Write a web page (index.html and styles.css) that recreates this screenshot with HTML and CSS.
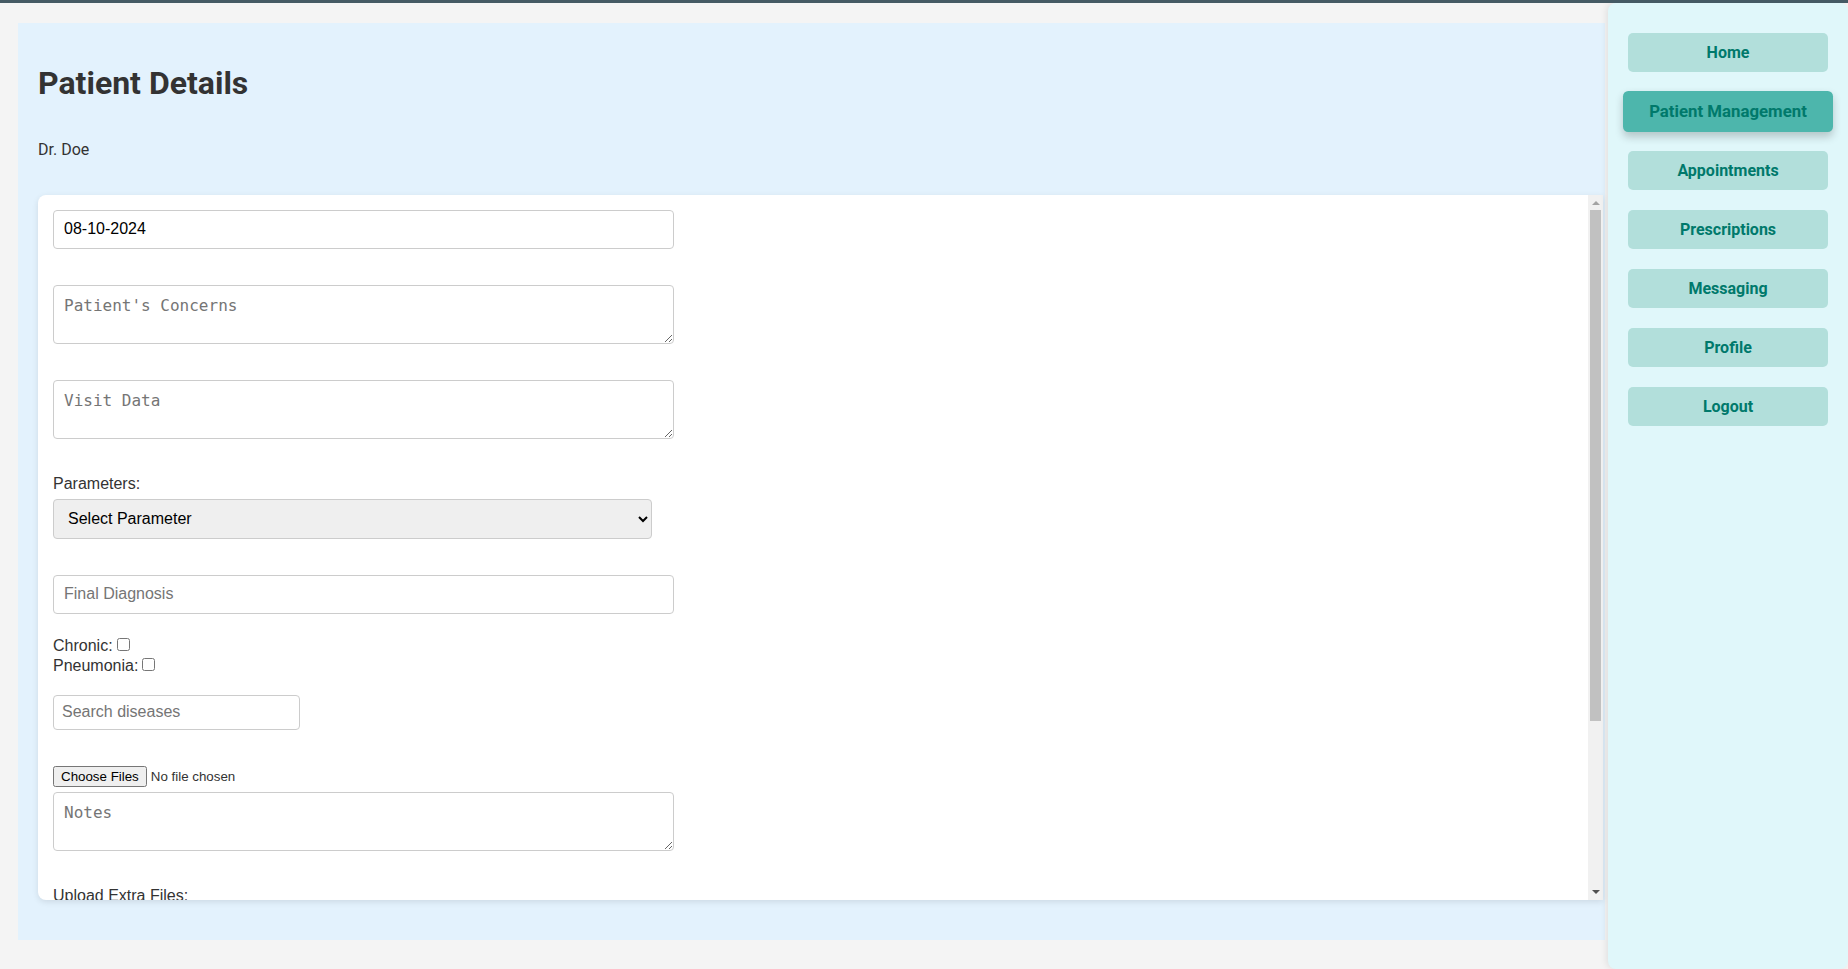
FILE: index.html
```html
<!DOCTYPE html>
<html lang="en">
<head>
    <meta charset="UTF-8">
    <meta name="viewport" content="width=device-width, initial-scale=1.0">
    <title>Patient Details</title>
    <link rel="stylesheet" href="styles.css">
</head>
<body>
    <div class="main">
        <div class="patient-panel">
            <h1>Patient Details</h1>
            <p class="doctor-name">Dr. Doe</p>

            <div class="visit-card">
                <div class="card-scroll">
                    <form class="visit-form">
                        <input type="text" class="field" value="08-10-2024">
                        <textarea class="field area" placeholder="Patient's Concerns"></textarea>
                        <textarea class="field area" placeholder="Visit Data"></textarea>

                        <label class="field-label" for="parameter">Parameters:</label>
                        <select id="parameter" class="param-select">
                            <option>Select Parameter</option>
                            <option>Blood Pressure</option>
                            <option>Heart Rate</option>
                            <option>Temperature</option>
                            <option>Oxygen Saturation</option>
                        </select>

                        <input type="text" class="field diagnosis" placeholder="Final Diagnosis">

                        <div class="checks">
                            <label>Chronic:<input type="checkbox"></label>
                            <label>Pneumonia:<input type="checkbox"></label>
                        </div>

                        <input type="text" class="search" placeholder="Search diseases">

                        <input type="file" class="file-input" multiple>
                        <textarea class="field area" placeholder="Notes"></textarea>

                        <label class="field-label">Upload Extra Files:</label>
                        <input type="file" class="file-input" multiple>

                        <button type="submit" class="save-btn">Save Visit</button>
                    </form>
                </div>

                <!-- scrollbar for the form area -->
                <div class="scrollbar">
                    <div class="scroll-arrow up"></div>
                    <div class="scroll-track">
                        <div class="scroll-thumb"></div>
                    </div>
                    <div class="scroll-arrow down"></div>
                </div>
            </div>
        </div>
    </div>

    <nav class="sidebar">
        <a href="#" class="nav-btn">Home</a>
        <a href="#" class="nav-btn active">Patient Management</a>
        <a href="#" class="nav-btn">Appointments</a>
        <a href="#" class="nav-btn">Prescriptions</a>
        <a href="#" class="nav-btn">Messaging</a>
        <a href="#" class="nav-btn">Profile</a>
        <a href="#" class="nav-btn">Logout</a>
    </nav>
</body>
</html>
```

FILE: styles.css
```css
* {
    box-sizing: border-box;
}

body {
    margin: 0;
    height: 100vh;
    overflow: hidden;
    display: flex;
    background-color: #f4f4f4;
    border-top: 3px solid #455a64;
    font-family: Roboto, "Liberation Sans", sans-serif;
    color: #333;
}

.main {
    flex: 1;
    min-width: 0;
    padding: 20px 3px 0 18px;
}

.patient-panel {
    height: 917px;
    background-color: #e3f2fd;
    padding: 20px 2px 20px 20px;
    display: flex;
    flex-direction: column;
}

h1 {
    font-size: 32px;
    margin: 21.44px 0;
    color: #333;
}

.doctor-name {
    font-size: 16px;
    margin: 16px 0;
}

.visit-card {
    flex: 1;
    min-height: 0;
    margin: 20px 0;
    display: flex;
    overflow: hidden;
    background-color: #ffffff;
    border-radius: 8px 0 0 8px;
    box-shadow: 0 2px 6px rgba(0, 0, 0, 0.1);
}

.card-scroll {
    flex: 1;
    min-width: 0;
    overflow-y: auto;
    padding: 15px;
}

.scrollbar {
    width: 15px;
    flex-shrink: 0;
    display: flex;
    flex-direction: column;
    background-color: #f1f1f1;
}

.scroll-arrow {
    height: 15px;
    flex-shrink: 0;
    display: flex;
    justify-content: center;
}

.scroll-arrow::before {
    content: "";
    width: 0;
    height: 0;
    border-left: 4px solid transparent;
    border-right: 4px solid transparent;
}

.scroll-arrow.up::before {
    margin-top: 6px;
    border-bottom: 4px solid #a3a3a3;
}

.scroll-arrow.down::before {
    margin-top: 5px;
    border-top: 4px solid #505050;
}

.scroll-track {
    flex: 1;
    padding: 0 2px;
}

.scroll-thumb {
    height: 511px;
    background-color: #c1c1c1;
}

.visit-form {
    font-family: "Liberation Sans", Arial, sans-serif;
    font-size: 16px;
    color: #333;
}

.field {
    display: block;
    width: 621px;
    height: 39px;
    padding: 10px;
    margin: 0 0 36px;
    border: 1px solid #ccc;
    border-radius: 4px;
    font-family: "Liberation Sans", Arial, sans-serif;
    font-size: 16px;
    color: #000;
}

.field.area {
    height: 59px;
    font-family: "DejaVu Sans Mono", monospace;
    resize: vertical;
}

.field.diagnosis {
    margin-bottom: 21px;
}

.field-label {
    display: block;
    margin-bottom: 6px;
}

.param-select {
    display: block;
    width: 599px;
    height: 40px;
    padding: 0 10px;
    margin: 0 0 36px;
    border: 1px solid #ccc;
    border-radius: 4px;
    background-color: #efefef;
    font-family: "Liberation Sans", Arial, sans-serif;
    font-size: 16px;
    color: #000;
}

.checks {
    margin-bottom: 20px;
}

.checks label {
    display: block;
    height: 20px;
    line-height: 20px;
}

.search {
    display: block;
    width: 247px;
    height: 35px;
    padding: 0 8px;
    margin: 0 0 36px;
    border: 1px solid #ccc;
    border-radius: 4px;
    font-family: "Liberation Sans", Arial, sans-serif;
    font-size: 16px;
}

.file-input {
    display: block;
    font-family: "Liberation Sans", Arial, sans-serif;
    font-size: 13.33px;
    margin-bottom: 5px;
}

.save-btn {
    display: block;
    margin: 30px 0 113px;
    padding: 10px 20px;
    border: none;
    border-radius: 5px;
    background-color: #4db6ac;
    color: #ffffff;
    font-size: 16px;
}

.sidebar {
    width: 240px;
    flex-shrink: 0;
    height: 100%;
    padding: 30px 20px;
    display: flex;
    flex-direction: column;
    gap: 20px;
    background-color: #e0f7fa;
    border-radius: 8px;
    box-shadow: -2px 0 6px rgba(0, 0, 0, 0.08);
}

.nav-btn {
    display: block;
    padding: 10px;
    background-color: #b2dfdb;
    color: #00796b;
    font-size: 16px;
    font-weight: bold;
    text-align: center;
    text-decoration: none;
    border-radius: 5px;
}

.nav-btn.active {
    background-color: #4db6ac;
    transform: scale(1.05);
    box-shadow: 0 4px 8px rgba(0, 0, 0, 0.2);
}
```
